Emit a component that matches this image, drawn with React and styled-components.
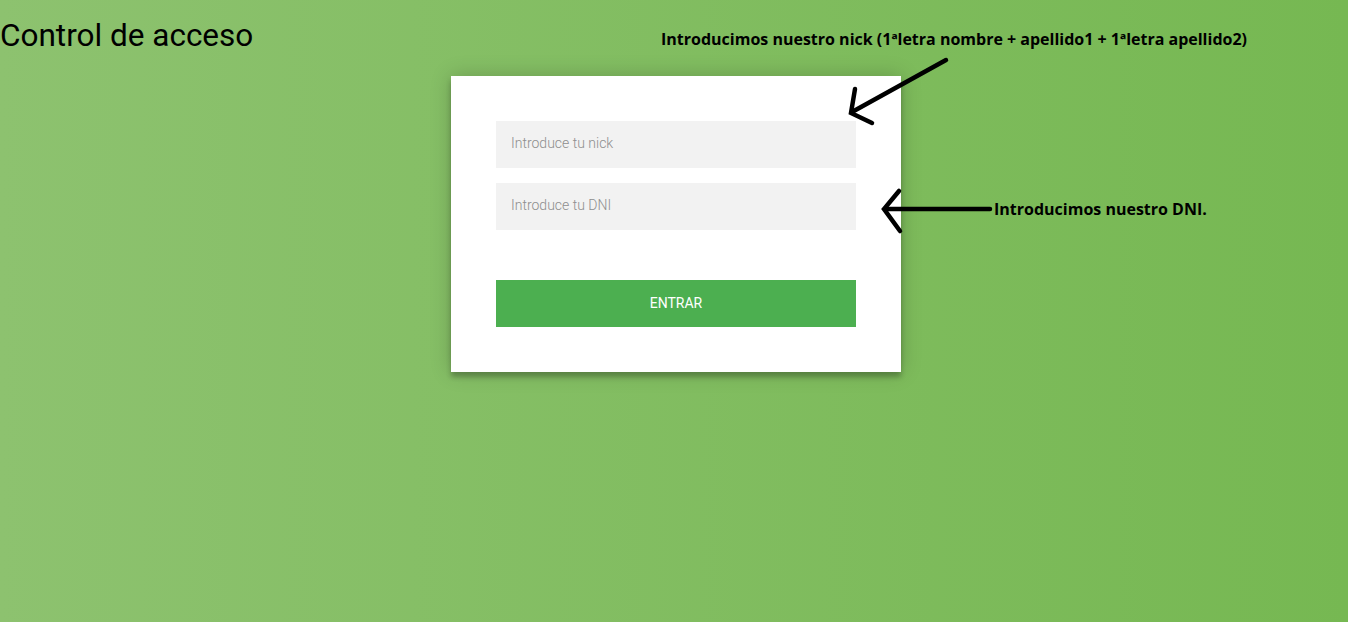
import React from "react"
import styled, { createGlobalStyle } from "styled-components"

const GlobalStyle = createGlobalStyle`
  html, body {
    margin: 0;
    padding: 0;
    height: 100%;
  }
  body {
    font-family: "Roboto", sans-serif;
    background: linear-gradient(to left, #76b852, #8dc26f);
    min-height: 622px;
  }
`

export default function App() {
  return (
    <>
      <GlobalStyle />
      <Page>
        <Title>Control de acceso</Title>
        <Card>
          <Input type="text" placeholder="Introduce tu nick" />
          <Input type="text" placeholder="Introduce tu DNI" />
          <Button>Entrar</Button>
        </Card>
        {/* notas sobre la captura */}
        <Note style={{ left: 661, top: 28 }}>
          Introducimos nuestro nick (1ªletra nombre + apellido1 + 1ªletra apellido2)
        </Note>
        <Note style={{ left: 994, top: 198 }}>Introducimos nuestro DNI.</Note>
        <Arrows width="1348" height="622" viewBox="0 0 1348 622">
          <g stroke="#000" strokeWidth="4.5" strokeLinecap="round" fill="none">
            <path d="M946 60 L852 112" />
            <path d="M855 89 L851 113 L872 123" />
            <path d="M885 209 L990 209" />
            <path d="M899 191 L884 209 L900 231" />
          </g>
        </Arrows>
      </Page>
    </>
  )
}

const Page = styled.div`
  position: relative;
  height: 622px;
  overflow: hidden;
`
const Title = styled.h1`
  margin: 0;
  padding-top: 16px;
  font-size: 31.5px;
  font-weight: 400;
  line-height: 40px;
  color: #000;
`
const Card = styled.form`
  width: 360px;
  margin: 20px auto 0;
  position: relative;
  left: 2px;
  padding: 45px;
  background: #fff;
  display: flex;
  flex-direction: column;
  box-shadow: 0 0 20px 0 rgba(0, 0, 0, 0.2), 0 5px 5px 0 rgba(0, 0, 0, 0.24);
`
const Input = styled.input`
  font-family: "Roboto", sans-serif;
  font-weight: 300;
  outline: 0;
  background: #f2f2f2;
  border: 0;
  margin: 0 0 15px;
  padding: 13px 15px 17px;
  height: 47px;
  box-sizing: border-box;
  font-size: 14px;
  color: #333;
  &::placeholder {
    color: #8e8e8e;
  }
`
const Button = styled.button`
  font-family: "Roboto", sans-serif;
  font-weight: 400;
  text-transform: uppercase;
  outline: 0;
  background: #4caf50;
  border: 0;
  margin-top: 35px;
  height: 47px;
  padding: 0 0 1px;
  color: #fff;
  font-size: 14px;
  cursor: pointer;
`
const Note = styled.div`
  position: absolute;
  font-family: "Open Sans", sans-serif;
  font-weight: 700;
  font-size: 16px;
  letter-spacing: 0;
  color: #000;
  white-space: nowrap;
`
const Arrows = styled.svg`
  position: absolute;
  left: 0;
  top: 0;
  pointer-events: none;
`
